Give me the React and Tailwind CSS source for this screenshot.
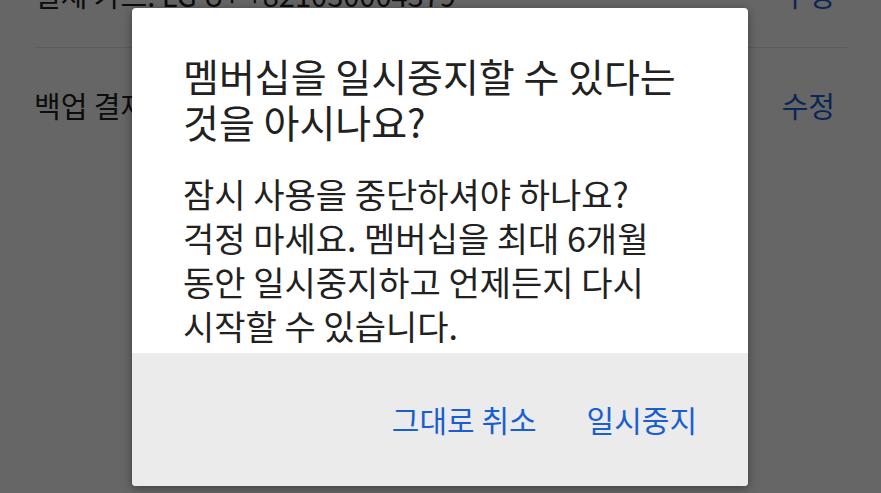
const font = { fontFamily: '"Noto Sans CJK KR", "Noto Sans", sans-serif' };

// Settings page dimmed behind a pause-membership confirmation dialog.
export default function App() {
  return (
    <div className="relative h-[493px] w-[881px] overflow-hidden bg-white" style={font}>
      <div className="px-[34px]">
        <div className="flex h-[48px] items-start justify-between border-b border-[#e6e6e6]">
          <span className="-mt-[24px] text-[29px] leading-[36px] text-[#222]">결제 카드: LG U+ +821030004379</span>
          <span className="-mt-[24px] mr-[12px] text-[29px] leading-[36px] text-[#1a5fd0]">수정</span>
        </div>
        <div className="flex h-[116px] items-center justify-between">
          <span className="text-[29px] text-[#222]">백업 결제 수단</span>
          <span className="mr-[12px] text-[29px] text-[#1a5fd0]">수정</span>
        </div>
      </div>

      <div className="absolute inset-0 bg-black/60" />

      <div className="absolute left-[132px] top-[8px] flex h-[478px] w-[616px] flex-col overflow-hidden rounded-[4px] bg-white shadow-[0_2px_10px_rgba(0,0,0,0.4)]">
        <div className="px-[51px] pt-[44px]">
          <h1 className="text-[39px] font-normal leading-[46px] text-[#212121]">
            멤버십을 일시중지할 수 있다는 것을 아시나요?
          </h1>
          <p className="mt-[28px] whitespace-nowrap text-[34px] leading-[44px] text-[#212121]">
            잠시 사용을 중단하셔야 하나요?
            <br />
            걱정 마세요. 멤버십을 최대 6개월
            <br />
            동안 일시중지하고 언제든지 다시
            <br />
            시작할 수 있습니다.
          </p>
        </div>
        <div className="mt-auto flex h-[133px] items-center justify-end gap-[50px] bg-[#ebebeb] pr-[51px]">
          <button className="text-[30px] text-[#1a5fd0]">그대로 취소</button>
          <button className="text-[30px] text-[#1a5fd0]">일시중지</button>
        </div>
      </div>
    </div>
  );
}
